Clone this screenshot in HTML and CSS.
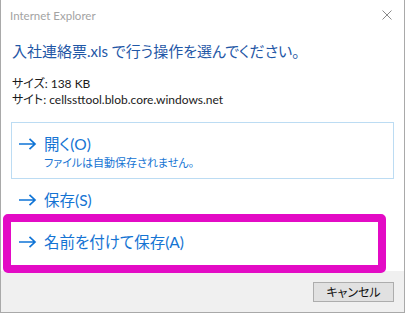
FILE: index.html
```html
<!DOCTYPE html>
<html lang="ja">
<head>
    <meta charset="UTF-8">
    <title>Internet Explorer</title>
    <link rel="stylesheet" href="styles.css">
</head>
<body>
    <div class="dialog">
        <div class="titlebar">
            <span class="title">Internet Explorer</span>
            <svg class="close" width="10" height="10" viewBox="0 0 10 10">
                <path d="M0.5 0.5 L9.5 9.5 M9.5 0.5 L0.5 9.5" stroke="#8a8a8a" stroke-width="1" fill="none"/>
            </svg>
        </div>
        <h1 class="heading">入社連絡票.xls で行う操作を選んでください。</h1>
        <div class="info">
            <div>サイズ: 138 KB</div>
            <div>サイト: cellssttool.blob.core.windows.net</div>
        </div>

        <div class="option option-open">
            <svg class="arrow" width="19" height="12" viewBox="0 0 19 12">
                <path d="M1 6 H17 M11.5 0.8 L17 6 L11.5 11.2" stroke="#0f74d6" stroke-width="1.7" fill="none"/>
            </svg>
            <div class="option-text">
                <div class="option-label">開く(O)</div>
                <div class="option-note">ファイルは自動保存されません。</div>
            </div>
        </div>

        <div class="option option-save">
            <svg class="arrow" width="19" height="12" viewBox="0 0 19 12">
                <path d="M1 6 H17 M11.5 0.8 L17 6 L11.5 11.2" stroke="#0f74d6" stroke-width="1.7" fill="none"/>
            </svg>
            <div class="option-text">
                <div class="option-label">保存(S)</div>
            </div>
        </div>

        <div class="highlight">
            <div class="option option-saveas">
                <svg class="arrow" width="19" height="12" viewBox="0 0 19 12">
                    <path d="M1 6 H17 M11.5 0.8 L17 6 L11.5 11.2" stroke="#0f74d6" stroke-width="1.7" fill="none"/>
                </svg>
                <div class="option-text">
                    <div class="option-label">名前を付けて保存(A)</div>
                </div>
            </div>
        </div>

        <div class="footer">
            <button class="btn">キャンセル</button>
        </div>
    </div>
</body>
</html>
```

FILE: styles.css
```css
body {
    margin: 0;
    background-color: #fff;
    font-family: Lato, "Noto Sans CJK JP", sans-serif;
    font-feature-settings: "palt";
}
.dialog {
    width: 405px;
    height: 313px;
    box-sizing: border-box;
    border: 1px solid #a9a9a9;
    border-top: none;
    display: flex;
    flex-direction: column;
    overflow: hidden;
}
.titlebar {
    height: 30px;
    display: flex;
    align-items: center;
    justify-content: space-between;
    padding: 0 11px 0 9px;
    flex-shrink: 0;
}
.title {
    font-size: 11.5px;
    color: #a3a3a3;
    line-height: 16px;
    margin-top: 2px;
}
.close {
    display: block;
    margin-right: 1px;
}
.heading {
    margin: 10px 0 0 11px;
    font-size: 15px;
    font-weight: normal;
    line-height: 22px;
    color: #1f57a6;
}
.info {
    margin: 14px 0 0 11px;
    font-size: 12px;
    line-height: 16px;
    color: #1a1a1a;
}
.option {
    display: flex;
    align-items: flex-start;
    gap: 7px;
    color: #1574d3;
}
.arrow {
    display: block;
    margin-top: 5px;
    flex-shrink: 0;
}
.option-label {
    font-size: 15.5px;
    line-height: 22px;
}
.option-note {
    font-size: 11px;
    line-height: 16px;
}
.option-open {
    margin: 14px 10px 0 10px;
    border: 1px solid #bcdcf3;
    padding: 10px 6px 7px 6px;
}
.option-save {
    margin: 0 10px 0 10px;
    padding: 10px 7px 3px 7px;
}
.highlight {
    position: relative;
    z-index: 1;
    margin: 0 0 -2px 2px;
    width: 383px;
    box-sizing: border-box;
    border: 8px solid #e30bc5;
    border-radius: 5px;
}
.option-saveas {
    padding: 9px 6px 12px 7px;
}
.footer {
    flex: 1;
    background-color: #f0f0f0;
    display: flex;
    justify-content: flex-end;
    align-items: flex-start;
    padding: 11px 10px 0 0;
}
.btn {
    width: 81px;
    height: 20px;
    box-sizing: border-box;
    border: 1px solid #adadad;
    background-color: #e1e1e1;
    font-family: "Noto Sans CJK JP", sans-serif;
    font-feature-settings: "palt";
    font-size: 12px;
    line-height: 16px;
    color: #111;
    padding: 0;
}
```
